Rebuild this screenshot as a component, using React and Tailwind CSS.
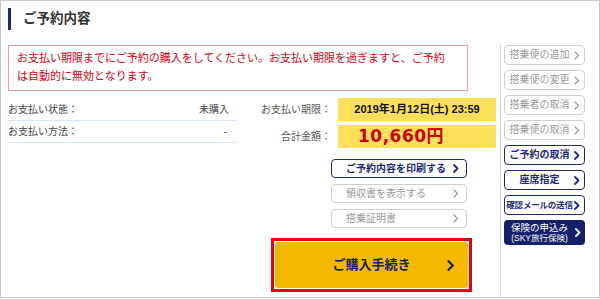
const JP = "font-['Liberation_Sans','Noto_Sans_CJK_JP',sans-serif]";

function Chevron({ className = "", bold = false }) {
  return (
    <svg width="6" height="9" viewBox="0 0 6 9" className={className}>
      <polyline
        points="1,1 4.5,4.5 1,8"
        fill="none"
        stroke="currentColor"
        strokeWidth={bold ? 1.8 : 1.2}
        strokeLinejoin="round"
        strokeLinecap="round"
      />
    </svg>
  );
}

const sideButtons = [
  { label: "搭乗便の追加", disabled: true },
  { label: "搭乗便の変更", disabled: true },
  { label: "搭乗者の取消", disabled: true },
  { label: "搭乗便の取消", disabled: true },
  { label: "ご予約の取消" },
  { label: "座席指定" },
  { label: "確認メールの送信", small: true },
];

function SideButton({ label, disabled, small }) {
  return (
    <div
      className={
        "flex h-[20px] items-center rounded-[4px] border bg-white pr-[4px] " +
        (disabled
          ? "border-[#cfcfcf] text-[#9a9a9a]"
          : "border-[#1d2a72] font-bold text-[#1d2a72]")
      }
    >
      <span
        className={
          "flex-1 text-center leading-none " +
          (small ? "text-[8.5px] tracking-[-0.2px]" : "text-[10px]")
        }
      >
        {label}
      </span>
      <Chevron bold={!disabled} />
    </div>
  );
}

function ActionButton({ label, disabled }) {
  return (
    <div
      className={
        "flex h-[19px] items-center rounded-[4px] border bg-white pl-[14px] pr-[7px] " +
        (disabled
          ? "border-[#cfcfcf] text-[#9a9a9a]"
          : "border-[#1d2a72] font-bold text-[#1d2a72]")
      }
    >
      <span className="flex-1 text-[10px] leading-none">{label}</span>
      <Chevron bold={!disabled} />
    </div>
  );
}

export default function App() {
  return (
    <div className={"h-[299px] w-[600px] bg-white " + JP}>
      <div className="flex h-[298px] flex-col border border-[#c8c8c8]">
        {/* title */}
        <div className="ml-[7px] mt-[7px] flex h-[22px] items-center">
          <div className="h-[22px] w-[3px] bg-[#1b2a6b]" />
          <h1 className="ml-[12px] text-[13.5px] font-bold text-[#333]">ご予約内容</h1>
        </div>

        <div className="mt-[15px] flex flex-1">
          {/* main */}
          <div className="ml-[7px] w-[488px]">
            <div className="h-[46px] w-[460px] border border-[#f09c9c] pl-[8px] pr-[16px] pt-[3px] text-[11px] leading-[18px] text-[#d7000f]">
              お支払い期限までにご予約の購入をしてください。お支払い期限を過ぎますと、ご予約は自動的に無効となります。
            </div>

            <div className="mt-[7px] flex">
              {/* status */}
              <div className="mt-[1px] w-[237px] text-[10px] text-[#444]">
                <div className="flex h-[22px] items-center justify-between border-b border-[#d6e6f5] pr-[8px]">
                  <span>お支払い状態：</span>
                  <span>未購入</span>
                </div>
                <div className="flex h-[22px] items-center justify-between border-b border-[#d6e6f5] pr-[10px]">
                  <span>お支払い方法：</span>
                  <span>-</span>
                </div>
              </div>

              {/* deadline / amount */}
              <div className="ml-[8px] flex flex-col gap-[4px]">
                <div className="flex items-center">
                  <span className="w-[86px] text-right text-[10px] text-[#555]">お支払い期限：</span>
                  <div className="ml-[7px] flex h-[23px] w-[158px] items-center justify-center bg-[#fde05a] text-[11px] font-bold text-[#111]">
                    2019年1月12日(土) 23:59
                  </div>
                </div>
                <div className="flex items-center">
                  <span className="w-[86px] text-right text-[10px] text-[#555]">合計金額：</span>
                  <div className="ml-[7px] flex h-[23px] w-[158px] items-center bg-[#fde05a] pl-[20px] text-[17px] font-bold leading-none text-[#d0000c]">
                    <span className="font-['DejaVu_Sans','Noto_Sans_CJK_JP',sans-serif] tracking-[0.5px]">10,660</span>
                    <span>円</span>
                  </div>
                </div>
              </div>
            </div>

            {/* actions */}
            <div className="ml-[323px] mt-[11px] flex w-[136px] flex-col gap-[6px]">
              <ActionButton label="ご予約内容を印刷する" />
              <ActionButton label="領収書を表示する" disabled />
              <ActionButton label="搭乗証明書" disabled />
            </div>

            <div className="ml-[263px] mt-[10px] h-[54px] w-[201px] border-[3px] border-[#e60012] bg-white p-[1px]">
              <div className="relative flex h-full items-center justify-center rounded-[3px] bg-[#f4b800] text-[13px] font-bold text-[#14206a]">
                ご購入手続き
                <Chevron bold className="absolute right-[13px] h-[11px] w-[8px]" />
              </div>
            </div>
          </div>

          {/* sidebar */}
          <div className="ml-[4px] border-l border-[#d4d4d4] pl-[3px]">
            <div className="flex w-[81px] flex-col gap-[5px]">
              {sideButtons.map((b) => (
                <SideButton key={b.label} {...b} />
              ))}
              <div className="flex h-[25px] items-center rounded-[4px] bg-[#14206a] pr-[4px] text-white">
                <div className="flex-1 text-center leading-none">
                  <div className="text-[9.5px]">保険の申込み</div>
                  <div className="mt-[1px] text-[8.5px]">(SKY旅行保険)</div>
                </div>
                <Chevron bold />
              </div>
            </div>
          </div>
        </div>
      </div>
    </div>
  );
}
